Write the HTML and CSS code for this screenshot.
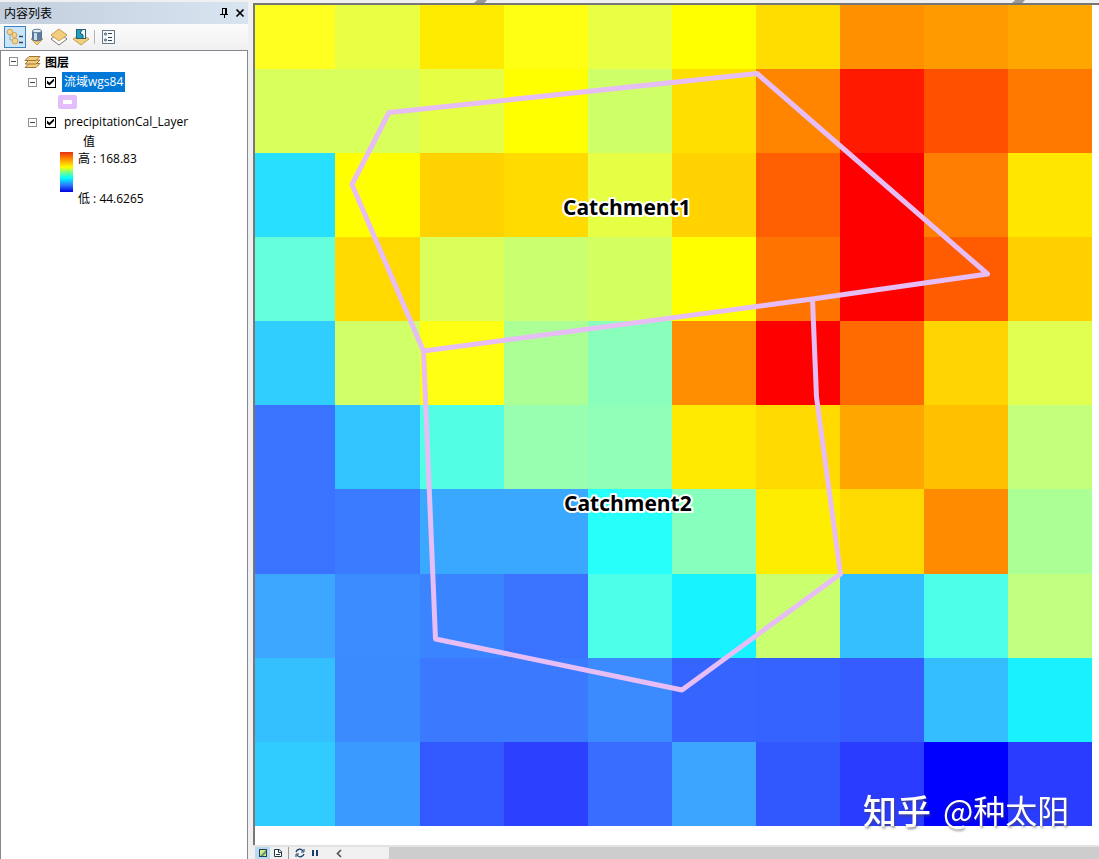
FILE: index.html
```html
<!DOCTYPE html>
<html lang="zh-CN">
<head>
<meta charset="utf-8">
<title>内容列表</title>
<link rel="stylesheet" href="styles.css">
</head>
<body>
<div class="app">
  <aside class="panel">
    <header class="panel-title">
      <h1 class="title-text">内容列表</h1>
      <button class="title-button" aria-label="固定">
        <svg width="10" height="10" viewBox="0 0 10 10"><path d="M3 0.500H7M3.500 0V6M6.500 0V6M7.500 0V6M1 6.500H9M5.500 6V10" fill="none" stroke="#000"/></svg>
      </button>
      <button class="title-button" aria-label="关闭">
        <svg width="10" height="10" viewBox="0 0 10 10"><path d="M1.500 1.500L8.500 8.500M8.500 1.500L1.500 8.500" fill="none" stroke="#000" stroke-width="1.700"/></svg>
      </button>
    </header>
    <div class="toolbar">
      <button class="tool tool-active" aria-label="按绘制顺序列出">
        <svg width="18" height="18" viewBox="0 0 18 18"><path d="M4 6V12H8M6 5L10 9" fill="none" stroke="#a8a595"/><g fill="#f5d58d" stroke="#cba45a"><circle cx="4" cy="4" r="2.800"/><circle cx="8.500" cy="7" r="2.500"/><circle cx="9" cy="13" r="2.900"/></g><path d="M13 8.500H17M13 14.500H17" stroke="#34435e" stroke-width="1.500"/></svg>
      </button>
      <button class="tool" aria-label="按源列出">
        <svg width="18" height="18" viewBox="0 0 18 18"><path d="M3 11L9 7L15 11L9 17Z" fill="#f4cf79" stroke="#c9a25a"/><path d="M4.500 3V11C4.500 13.500 13.500 13.500 13.500 11V3Z" fill="#607b9e" stroke="#56708f"/><path d="M6 4V12L9 12V4Z" fill="#c9deec"/><ellipse cx="9" cy="3" rx="4.500" ry="1.800" fill="#e3eef5" stroke="#637b96"/></svg>
      </button>
      <button class="tool" aria-label="按可见性列出">
        <svg width="18" height="18" viewBox="0 0 18 18"><path d="M1 11L9 5L17 11L9 17Z" fill="#fff" stroke="#777"/><path d="M1 7L9 1L17 7L9 13Z" fill="#f4cf7b" stroke="#c59c55"/></svg>
      </button>
      <button class="tool" aria-label="按选择列出">
        <svg width="18" height="18" viewBox="0 0 18 18"><path d="M1 11L9 6L17 11L9 17Z" fill="#f4cf79" stroke="#c59c55"/><rect x="4.500" y="1.500" width="9" height="9" fill="#eefafc" stroke="#315b73"/><path d="M5 2H10L8 5L11 7V10H5Z" fill="#16a4bf"/><path d="M10 2L8 5L11 7V10" fill="none" stroke="#24485a"/></svg>
      </button>
      <span class="tool-separator"></span>
      <button class="tool" aria-label="选项">
        <svg width="18" height="18" viewBox="0 0 18 18"><rect x="3.500" y="2.500" width="12" height="13" fill="#f8fbfd" stroke="#66788a"/><path d="M9 5.500H13M9 9.500H13M9 12.500H13" stroke="#34465a"/><circle cx="6.500" cy="6" r="1" fill="none" stroke="#34465a"/><circle cx="6.500" cy="12" r="1" fill="none" stroke="#34465a"/></svg>
      </button>
    </div>
    <div class="tree">
      <div class="tree-row">
        <button class="expander" aria-label="折叠图层"></button>
        <svg class="group-icon" width="17" height="14" viewBox="0 0 17 14"><g fill="#f3cd82" stroke="#a37533"><path d="M1 12.500L5 8.500H16L12 12.500Z"/><path d="M1 9L5 5H16L12 9Z"/><path d="M1 5.500L5 1.500H16L12 5.500Z"/></g></svg>
        <span class="group-name">图层</span>
      </div>
      <div class="tree-row layer-row">
        <button class="expander" aria-label="折叠流域wgs84"></button>
        <input class="check" type="checkbox" id="layer-basin" checked>
        <label class="layer-name selected" for="layer-basin">流域wgs84</label>
      </div>
      <div class="tree-row symbol-row"><span class="symbol"></span></div>
      <div class="tree-row layer-row">
        <button class="expander" aria-label="折叠precipitationCal_Layer"></button>
        <input class="check" type="checkbox" id="layer-rain" checked>
        <label class="layer-name" for="layer-rain">precipitationCal_Layer</label>
      </div>
      <div class="value-row">值</div>
      <div class="legend">
        <span class="ramp"></span>
        <div class="legend-labels"><span>高 : 168.83</span><span>低 : 44.6265</span></div>
      </div>
    </div>
  </aside>
  <main class="workspace">
    <div class="ruler"><span class="grip"></span><span class="grip"></span></div>
    <div class="map">
      <svg class="map-drawing" viewBox="255 5 844 840" preserveAspectRatio="xMinYMin meet">
        <g id="raster" shape-rendering="crispEdges"></g>
        <g class="boundary">
          <path d="M389 112.500L757 73.500L987.500 274L812.500 299L423.500 351L352 184.500Z"/>
          <path d="M423.500 351L435.500 639L682 690L840.500 574L816.500 397L812.500 299"/>
        </g>
        <g class="map-label">
          <text x="563" y="215">Catchment1</text>
          <text x="564" y="511">Catchment2</text>
        </g>
        <g class="watermark">
          <text class="watermark-brand" x="863" y="824">知乎</text>
          <text x="943" y="823">@种太阳</text>
        </g>
      </svg>
    </div>
    <footer class="status">
      <button class="view view-active" aria-label="数据视图"><svg width="10" height="10" viewBox="0 0 10 10"><rect x="1.500" y="1.500" width="7" height="7" fill="#dbe58a" stroke="#24435a"/><path d="M2 8L8 2V5L5 8Z" fill="#5c9b72"/></svg></button>
      <button class="view" aria-label="布局视图"><svg width="10" height="10" viewBox="0 0 10 10"><path d="M1.500 1.500H6L8.500 3.500V8.500H1.500Z" fill="#fff" stroke="#243548"/><path d="M5.500 1V4.500H8M3 6.500H7" fill="none" stroke="#243548"/></svg></button>
      <span class="status-separator"></span>
      <button class="view" aria-label="刷新"><svg width="10" height="10" viewBox="0 0 10 10"><path d="M1 4C2 1 6 0 8 3M9 6C8 9 4 10 2 7" fill="none" stroke="#173e6b" stroke-width="1.300"/><path d="M9 1V4H6M1 9V6H4" fill="none" stroke="#173e6b"/></svg></button>
      <button class="view" aria-label="暂停"><svg width="10" height="10" viewBox="0 0 10 10"><path d="M3 2V8M7 2V8" stroke="#173e6b" stroke-width="2"/></svg></button>
      <button class="view scroll-left" aria-label="向左滚动"><svg width="10" height="10" viewBox="0 0 10 10"><path d="M7 2L3.500 5.500L7 9" fill="none" stroke="#555" stroke-width="1.700"/></svg></button>
      <span class="scroll-thumb"></span>
    </footer>
  </main>
</div>
<script src="map.js"></script>
</body>
</html>
```
FILE: styles.css
```css
* { box-sizing: border-box; }

body {
  margin: 0;
  background: #f0f0f0;
  color: #000;
  font-family: "Open Sans", "Noto Sans CJK SC", sans-serif;
  font-size: 12px;
}

button {
  display: grid;
  place-items: center;
  padding: 0;
  border: 0;
  background: none;
}

svg { display: block; }

.app {
  display: grid;
  grid-template-columns: 248px minmax(0, 1fr);
  gap: 5px;
  height: 100vh;
}

.panel {
  display: flex;
  flex-direction: column;
  padding-top: 2px;
}

.panel-title {
  display: flex;
  align-items: center;
  gap: 6px;
  height: 22px;
  padding: 0 3px 0 4px;
  background: linear-gradient(90deg, #c2cedc, #d9e4f1);
}

.title-text {
  flex: 1;
  margin: 0;
  font-size: 12px;
  font-weight: 400;
}

.title-button { width: 10px; height: 16px; }

.toolbar {
  display: flex;
  align-items: center;
  height: 26px;
  padding-left: 4px;
  background: linear-gradient(#fcfcfc, #f0f0f0);
}

.tool { width: 22px; height: 22px; }
.tool-active { border: 1px solid #3c83c4; background: #cce4f7; }

.tool-separator {
  width: 1px;
  height: 14px;
  margin: 0 2px;
  background: #b5b5b5;
}

.tree {
  flex: 1;
  border: 1px solid #828790;
  border-bottom: 0;
  background: #fff;
}

.tree-row {
  display: flex;
  align-items: center;
  height: 20px;
  padding-left: 8px;
}

.tree-row:first-child { height: 21px; }
.layer-row { padding-left: 27px; }
.symbol-row { padding-left: 57px; }

.expander {
  width: 9px;
  height: 9px;
  border: 1px solid #919191;
  background: linear-gradient(#444, #444) center / 5px 1px no-repeat #fff;
}

.group-icon { margin: 0 4px 0 6px; }
.group-name { font-weight: 700; }

.check {
  display: grid;
  place-items: center;
  appearance: none;
  width: 11px;
  height: 11px;
  margin: 0 6px 0 8px;
  border: 1px solid #000;
  background: #fff;
}

.check:checked::before {
  content: "";
  width: 7px;
  height: 7px;
  background: #000;
  clip-path: polygon(0 30%, 35% 60%, 100% 0, 100% 35%, 35% 100%, 0 70%);
}

.layer-name { padding: 0 2px; line-height: 20px; }
.selected { background: #0078d7; color: #fff; }

.symbol {
  width: 19px;
  height: 14px;
  border: 5px solid #e3befa;
  border-radius: 2px;
}

.value-row { padding-left: 82px; line-height: 20px; }

.legend {
  display: flex;
  gap: 5px;
  padding-left: 59px;
}

.ramp {
  width: 13px;
  height: 40px;
  background: linear-gradient(#e53211, #ff7f00 15%, #ffff00 38%, #7dff83 50%, #00ffff 65%, #2a7fff 82%, #0000e0);
}

.legend-labels {
  display: flex;
  flex-direction: column;
  gap: 26px;
  line-height: 14px;
}

.workspace {
  display: grid;
  grid-template-rows: 3px minmax(0, 1fr) 14px;
  min-width: 0;
}

.ruler {
  display: flex;
  justify-content: space-between;
  padding: 0 74px 0 221px;
}

.grip {
  width: 13px;
  height: 3px;
  background: #999;
  clip-path: polygon(25% 0, 100% 0, 80% 100%, 0 100%);
}

.map {
  min-height: 0;
  border-top: 2px solid #777;
  border-left: 2px solid #777;
  background: #fff;
}

.map-drawing { width: 100%; height: 100%; }

.boundary {
  fill: none;
  stroke: #e6bdf5;
  stroke-width: 5px;
  stroke-linejoin: round;
}

.map-label {
  font-size: 21px;
  font-weight: 700;
  stroke: #fff;
  stroke-width: 4px;
  stroke-linejoin: round;
  paint-order: stroke;
}

.watermark {
  fill: #fff;
  font-family: "Noto Sans CJK SC", sans-serif;
  font-size: 32px;
  filter: drop-shadow(1px 2px 1px #4448);
}

.watermark-brand { font-size: 34px; font-weight: 500; }

.status {
  display: flex;
  align-items: stretch;
  padding-left: 2px;
  border-top: 2px solid #e3e3e3;
}

.view { width: 15px; }
.view-active { background: #b9d9f1; }

.status-separator {
  width: 1px;
  margin: 0 3px;
  background: #999;
}

.scroll-left { margin: 0 43px 0 9px; }
.scroll-thumb { flex: 1; background: #cdcdcd; }
```
FILE: map.js
```javascript
const columns = [255, 335, 420, 504, 588, 672, 756, 840, 924, 1008, 1092];
const rows = [5, 69, 153, 237, 321, 405, 489, 574, 658, 742, 826];
const colours = [
  "ffff20 e8ff43 ffeb00 ffff14 e8ff43 ffff00 ffdd00 ff9000 ff9a00 ffa600",
  "d8ff5c d8ff5c e6ff45 ffff00 ceff68 ffdf00 ff8500 ff1a00 ff5000 ff7800",
  "27dfff ffff00 ffd200 ffdb00 e6ff45 ffd200 ff5f00 ff0000 ff7d00 ffe700",
  "66ffdd ffd900 daff5a caff70 d4ff60 ffff00 ff7300 ff0000 ff5b00 ffd000",
  "30ceff d0ff67 ffff14 abff94 8affbc ff8d00 ff0000 ff6b00 ffd400 e0ff50",
  "3973ff 32c4ff 52ffe5 98ffb0 90ffb8 ffe900 ffd900 ffa600 ffc000 c3ff7a",
  "3973ff 3b7bff 3aa8ff 3aa8ff 27fffb 87ffbd ffed00 ffda00 ff8b00 acff94",
  "3da6ff 3b8cff 3a84ff 3973ff 4dffe8 18f4ff caff70 35bfff 4dffe8 c0ff7f",
  "34bfff 3b8bff 3b7aff 3b7aff 3b8bff 3664ff 3563ff 345cff 35beff 19f1ff",
  "30ccff 3a9aff 3258ff 2c40ff 396dff 3ba5ff 3157ff 2a3cff 0000ff 2a3cff"
];

const raster = document.getElementById("raster");

colours.forEach((line, r) => {
  line.split(" ").forEach((colour, c) => {
    const cell = document.createElementNS("http://www.w3.org/2000/svg", "rect");
    cell.setAttribute("x", columns[c]);
    cell.setAttribute("y", rows[r]);
    cell.setAttribute("width", columns[c + 1] - columns[c]);
    cell.setAttribute("height", rows[r + 1] - rows[r]);
    cell.setAttribute("fill", "#" + colour);
    raster.appendChild(cell);
  });
});
```
